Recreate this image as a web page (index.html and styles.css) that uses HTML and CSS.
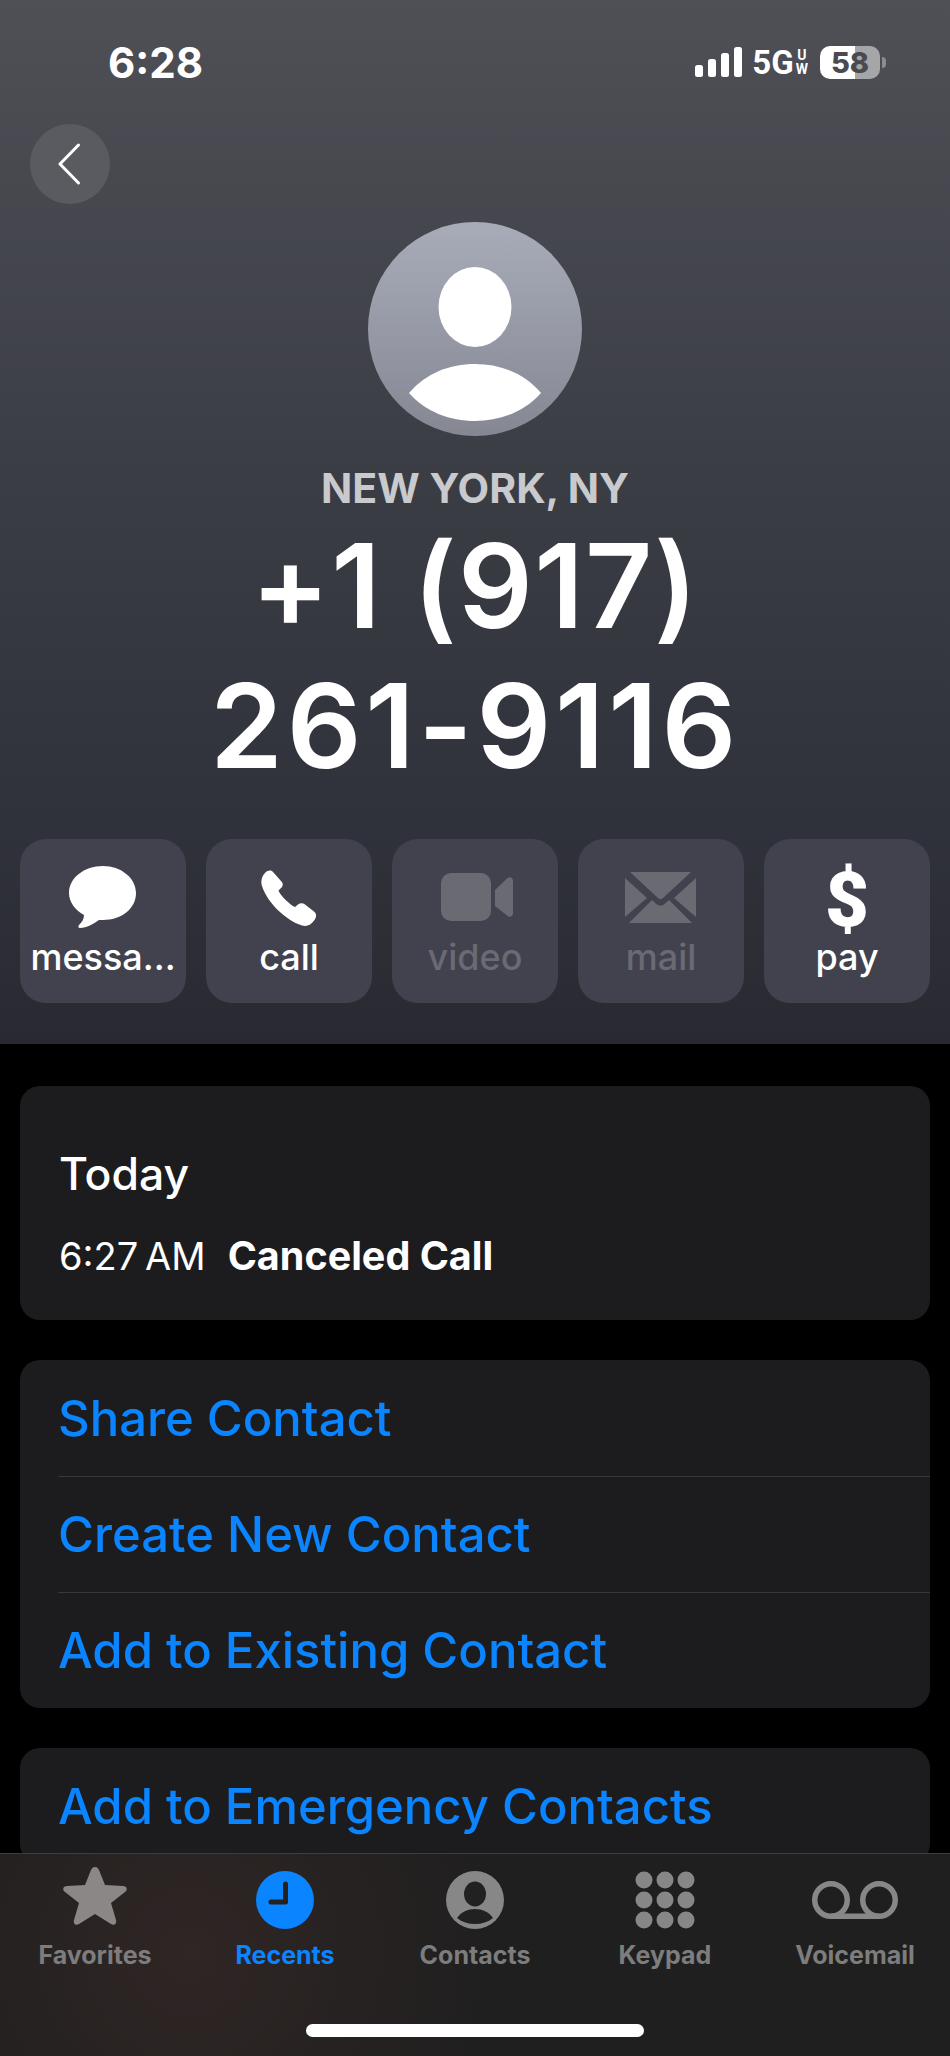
FILE: index.html
```html
<!DOCTYPE html>
<html>

<head>
    <meta charset="utf-8">
    <title>Recents</title>
    <link rel="stylesheet" href="styles.css">
</head>

<body>
<div class="screen">
    <div class="scroll">
        <header class="hero">
            <div class="status">
                <span class="clock">6:28</span>
                <div class="status-right">
                    <svg class="signal" width="47" height="30" viewBox="0 0 47 30">
                        <rect x="0" y="18" width="8" height="12" rx="2.500"/>
                        <rect x="13" y="12" width="8" height="18" rx="2.500"/>
                        <rect x="26" y="6" width="8" height="24" rx="2.500"/>
                        <rect x="39" y="0" width="8" height="30" rx="2.500"/>
                    </svg>
                    <span class="net">5G</span>
                    <span class="net-uw"><span>U</span><span>W</span></span>
                    <div class="battery"><span>58</span></div>
                    <div class="battery-cap"></div>
                </div>
            </div>
            <div class="back">
                <svg width="24" height="42" viewBox="0 0 24 42">
                    <path d="M21.500 2 L3 21 L21.500 40" fill="none" stroke="#fff" stroke-width="3" stroke-linecap="round" stroke-linejoin="round"/>
                </svg>
            </div>
            <div class="avatar">
                <svg width="214" height="214" viewBox="0 0 214 214">
                    <ellipse cx="107" cy="85" rx="36.500" ry="40" fill="#fff"/>
                    <path d="M41 171 C58 151 82 142 107 142 C132 142 156 151 173 171 C156 190 132 199 107 199 C82 199 58 190 41 171 Z" fill="#fff"/>
                </svg>
            </div>
            <div class="place">NEW YORK, NY</div>
            <h1 class="number"><span class="line-a">+1 (917)</span><span class="line-b">261-9116</span></h1>
            <div class="actions">
                <div class="action">
                    <svg width="70" height="64" viewBox="0 0 70 64">
                        <path transform="translate(1 0)" d="M34 0 C52 0 67 12 67 27 C67 43 52 54 34 54 C33 54 32 54 30 54 C24 58 18 62 11 62 C9 62 9 60 10 59 C13 56 15 53 15 49 C6 44 0 36 0 27 C0 12 15 0 34 0 Z" fill="#fff"/>
                    </svg>
                    <span>messa...</span>
                </div>
                <div class="action">
                    <svg width="70" height="64" viewBox="0 0 70 64">
                        <path transform="translate(7 5)" d="M4 2 C7 -1 10 -1 12 1 L20 10 C22.500 12.500 22 15 20.500 16.500 L17.500 19.500 C19 24 29 34 34 36 L37 33.500 C39 32 41.500 31.500 44 33.500 L53 40.500 C56 43 55.500 46 53.500 49 C50 54 46 56 41 54.500 C24 49 6 31 1 15 C-0.500 10 1 5 4 2 Z" fill="#fff"/>
                    </svg>
                    <span>call</span>
                </div>
                <div class="action off">
                    <svg width="76" height="64" viewBox="0 0 76 64">
                        <rect x="4" y="7" width="50" height="48" rx="10" fill="#696a72"/>
                        <path d="M58 24 L70 12.500 C73 10 76 11.500 76 15 L76 47 C76 50.500 73 52 70 49.500 L58 40 Z" fill="#696a72"/>
                    </svg>
                    <span>video</span>
                </div>
                <div class="action off">
                    <svg width="72" height="64" viewBox="0 0 72 64">
                        <path d="M5 6 H66 L38 32 C36.500 33.500 34.500 33.500 33 32 Z" fill="#696a72"/>
                        <path d="M0 12 L22 32 L0 51 Z" fill="#696a72"/>
                        <path d="M71 12 L49 32 L71 51 Z" fill="#696a72"/>
                        <path d="M4 57 L27 34 L32 38.500 C34 40 37 40 39 38.500 L44 34 L67 57 Z" fill="#696a72"/>
                    </svg>
                    <span>mail</span>
                </div>
                <div class="action">
                    <span class="dollar">$</span>
                    <span>pay</span>
                </div>
            </div>
        </header>

        <section class="card today">
            <div class="today-title">Today</div>
            <div class="today-row"><span class="today-time">6:27&#8201;AM</span><b>Canceled Call</b></div>
        </section>

        <section class="card links">
            <a>Share Contact</a>
            <a>Create New Contact</a>
            <a>Add to Existing Contact</a>
        </section>

        <section class="card links">
            <a>Add to Emergency Contacts</a>
        </section>
    </div>

    <nav class="tabs">
        <div class="tab">
            <svg width="66" height="62" viewBox="0 4 66 62">
                <path d="M33 2 C35 2 36 3 37 5 L43 20 L61 21 C65 21 66 25 63 27 L49 38 L54 55 C55 59 52 61 49 59 L33 49 L17 59 C14 61 11 59 12 55 L17 38 L3 27 C0 25 1 21 5 21 L23 20 L29 5 C30 3 31 2 33 2 Z" fill="#8b8786"/>
            </svg>
            <span>Favorites</span>
        </div>
        <div class="tab active">
            <svg width="58" height="58" viewBox="0 0 58 58">
                <circle cx="29" cy="29" r="29" fill="#0a84ff"/>
                <path d="M29.500 13 V31 H15" fill="none" stroke="#25211f" stroke-width="5" stroke-linecap="round" stroke-linejoin="round"/>
            </svg>
            <span>Recents</span>
        </div>
        <div class="tab">
            <svg width="58" height="58" viewBox="0 0 58 58">
                <circle cx="29" cy="29" r="29" fill="#878787"/>
                <ellipse cx="29" cy="23" rx="11" ry="12.500" fill="#212121"/>
                <path d="M11 47 C15 41 22 38 29 38 C36 38 43 41 47 47 C42 51 36 53 29 53 C22 53 16 51 11 47 Z" fill="#212121"/>
            </svg>
            <span>Contacts</span>
        </div>
        <div class="tab">
            <svg width="60" height="58" viewBox="0 0 60 58">
                <circle cx="9" cy="9" r="8.500" fill="#878787"/>
                <circle cx="30" cy="9" r="8.500" fill="#878787"/>
                <circle cx="51" cy="9" r="8.500" fill="#878787"/>
                <circle cx="9" cy="29" r="8.500" fill="#878787"/>
                <circle cx="30" cy="29" r="8.500" fill="#878787"/>
                <circle cx="51" cy="29" r="8.500" fill="#878787"/>
                <circle cx="9" cy="49" r="8.500" fill="#878787"/>
                <circle cx="30" cy="49" r="8.500" fill="#878787"/>
                <circle cx="51" cy="49" r="8.500" fill="#878787"/>
            </svg>
            <span>Keypad</span>
        </div>
        <div class="tab">
            <svg width="86" height="58" viewBox="0 0 86 58">
                <circle cx="19" cy="29" r="16.250" fill="none" stroke="#878787" stroke-width="5.500"/>
                <circle cx="67" cy="29" r="16.250" fill="none" stroke="#878787" stroke-width="5.500"/>
                <path d="M19 45.250 H67" fill="none" stroke="#878787" stroke-width="5.500"/>
            </svg>
            <span>Voicemail</span>
        </div>
    </nav>
    <div class="home-area"><div class="home-bar"></div></div>
</div>
</body>

</html>
```

FILE: styles.css
```css
* {
    box-sizing: border-box;
}

html, body {
    margin: 0;
    background: #000;
}

body {
    font-family: Inter, "Liberation Sans", sans-serif;
    color: #fff;
}

.screen {
    width: 950px;
    height: 2056px;
    display: flex;
    flex-direction: column;
    overflow: hidden;
}

.scroll {
    flex: 1;
    min-height: 0;
    overflow: hidden;
}

.hero {
    height: 1044px;
    padding: 0 20px;
    background: linear-gradient(#4f5056, #3c3e46 43%, #31333c 76%, #292a31);
}

.status {
    display: flex;
    justify-content: space-between;
    align-items: center;
    height: 124px;
    padding: 0 0 0 88px;
}

.clock {
    font-size: 42px;
    font-weight: 700;
}

.status-right {
    display: flex;
    align-items: center;
    padding-right: 44px;
}

.signal {
    fill: #fff;
    margin-right: 10px;
}

.net {
    font-family: Roboto, sans-serif;
    font-size: 33px;
    font-weight: 700;
}

.net-uw {
    display: flex;
    flex-direction: column;
    align-items: center;
    margin: 0 12px 0 2px;
    font-family: Roboto, sans-serif;
    font-size: 14px;
    line-height: 14px;
    font-weight: 700;
}

.battery {
    width: 60px;
    height: 33px;
    border-radius: 10px;
    background: linear-gradient(90deg, #fff 58%, #a6a6a8 58%);
    color: #4a4b50;
    font-size: 29px;
    font-weight: 800;
    line-height: 33px;
    text-align: center;
}

.battery-cap {
    width: 4px;
    height: 11px;
    margin-left: 2px;
    border-radius: 0 4px 4px 0;
    background: #8d8d90;
}

.back {
    display: flex;
    align-items: center;
    justify-content: center;
    width: 80px;
    height: 80px;
    margin-left: 10px;
    padding-right: 3px;
    border-radius: 50%;
    background: #5a5b60;
}

.avatar {
    display: flex;
    width: 214px;
    height: 214px;
    margin: 18px auto 0;
    border-radius: 50%;
    background: linear-gradient(#a8acb9, #858893);
}

.place {
    margin-top: 29px;
    font-size: 41px;
    line-height: 46px;
    font-weight: 700;
    text-align: center;
    color: #c9cacd;
}

.number {
    margin: 5px 0 0;
    font-size: 117px;
    line-height: 140px;
    font-weight: 600;
    text-align: center;
}

.number span {
    display: block;
}

.line-a {
    letter-spacing: 1.400px;
}

.line-b {
    letter-spacing: 3.700px;
}

.actions {
    display: flex;
    gap: 20px;
    margin-top: 43px;
}

.action {
    display: flex;
    flex-direction: column;
    align-items: center;
    width: 166px;
    height: 164px;
    padding-top: 27px;
    border-radius: 26px;
    background: #41424e;
    font-size: 36px;
    line-height: 44px;
    font-weight: 500;
}

.action svg {
    height: 64px;
    margin-bottom: 5px;
}

.action.off {
    color: #696a72;
}

.dollar {
    height: 69px;
    font-family: Roboto, sans-serif;
    font-size: 76px;
    line-height: 69px;
    font-weight: 900;
}

.card {
    margin: 40px 20px 0;
    border-radius: 20px;
    background: #1c1c1e;
}

.today {
    height: 234px;
    margin-top: 42px;
    padding: 61px 39px 0;
}

.today-title {
    font-size: 44.500px;
    line-height: 54px;
    font-weight: 500;
}

.today-row {
    display: flex;
    margin-top: 32px;
    font-size: 38px;
    line-height: 46px;
}

.today-row b {
    font-size: 39.500px;
    font-weight: 700;
}

.today-time {
    margin-right: 22px;
}

.links {
    padding-left: 38px;
}

.links a {
    display: flex;
    align-items: center;
    height: 116px;
    font-size: 49px;
    font-weight: 500;
    color: #0a84ff;
    border-top: 1px solid #38383a;
}

.links a:first-child {
    border-top: 0;
}

.tabs {
    display: grid;
    grid-template-columns: repeat(5, 1fr);
    flex-shrink: 0;
    height: 131px;
    padding-top: 15px;
    border-top: 1px solid #3d3d3f;
    background: #201f1f;
    background-image: radial-gradient(circle at 190px 100px, #2f2625, #201f1f 300px);
}

.tab {
    display: flex;
    flex-direction: column;
    align-items: center;
    justify-content: flex-start;
    font-size: 25px;
    line-height: 34px;
    font-weight: 700;
    color: #7d7d7d;
}

.tab svg {
    display: block;
    height: 62px;
    margin-bottom: 7px;
    overflow: visible;
}

.tab.active {
    color: #0a84ff;
}

.home-area {
    flex-shrink: 0;
    height: 72px;
    padding-top: 40px;
    background: #201f1f;
    background-image: radial-gradient(circle at 190px -30px, #2f2625, #201f1f 300px);
}

.home-bar {
    width: 338px;
    height: 13px;
    margin: 0 auto;
    border-radius: 7px;
    background: #fff;
}
```
